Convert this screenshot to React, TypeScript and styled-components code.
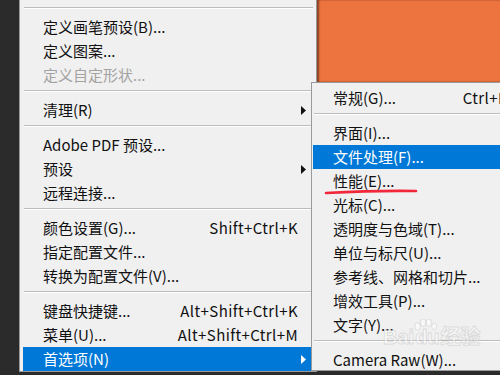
import React from 'react'
import styled, { createGlobalStyle } from 'styled-components'

const GlobalStyle = createGlobalStyle`
  html, body {
    margin: 0;
    padding: 0;
    background: #2b2b2b;
  }
  body {
    font-family: "Noto Sans CJK SC", "Noto Sans", sans-serif;
  }
`

const Page = styled.div`
  position: relative;
  display: flex;
  width: 500px;
  height: 375px;
  overflow: hidden;
  background: #2b2b2b;
`

const Gutter = styled.div`
  width: 19px;
  flex: none;
`

const Menu = styled.div`
  flex: none;
  width: 290px;
  height: 367px;
  padding: 4px 3px 0;
  background: #f0f0f0;
  border-left: 1px solid #9a9a9a;
  border-right: 1px solid #9a9a9a;
  border-bottom: 1px solid #9a9a9a;
`

const Canvas = styled.div`
  flex: 1;
  display: flex;
  flex-direction: column;
`

const Orange = styled.div`
  height: 82px;
  background: #ee743f;
  box-shadow: inset 2px 0 2px rgba(0, 0, 0, 0.45);
`

const SubMenu = styled.div`
  position: absolute;
  left: 311px;
  top: 82px;
  width: 210px;
  height: 284px;
  padding: 3px 1px 0;
  background: #f0f0f0;
  border-left: 1px solid #9a9a9a;
  border-top: 1px solid #9a9a9a;
  border-bottom: 1px solid #9a9a9a;
`

const Row = styled.div<{ $active?: boolean; $disabled?: boolean }>`
  display: flex;
  align-items: center;
  height: 24px;
  padding-left: 20px;
  font-size: 15px;
  line-height: 24px;
  white-space: nowrap;
  color: ${({ $active, $disabled }) => ($active ? '#ffffff' : $disabled ? '#a3a3a3' : '#111111')};
  background: ${({ $active }) => ($active ? '#0078d7' : 'transparent')};
`

const Label = styled.span`
  flex: 1;
`

const Shortcut = styled.span`
  letter-spacing: 0.4px;
`

const ArrowSlot = styled.span<{ $light?: boolean }>`
  width: 15px;
  flex: none;
  display: flex;
  align-items: center;
  padding-left: 3px;
  box-sizing: border-box;

  svg {
    fill: ${({ $light }) => ($light ? '#ffffff' : '#111111')};
  }
`

const Separator = styled.div`
  height: 11px;
  padding-top: 3px;
  box-sizing: border-box;

  &::before {
    content: '';
    display: block;
    margin-left: 1px;
    border-top: 1px solid #bcbcbc;
    border-bottom: 1px solid #ffffff;
  }
`

const Mark = styled.svg`
  position: absolute;
  left: 324px;
  top: 186px;
  overflow: visible;
`

const Watermark = styled.div`
  position: absolute;
  left: 383px;
  top: 327px;
  width: max-content;
  white-space: nowrap;
  font-family: "Liberation Sans", "Noto Sans CJK SC", sans-serif;
  font-size: 20px;
  font-weight: bold;
  line-height: 1;
  color: rgba(255, 255, 255, 0.5);
  -webkit-text-stroke: 1px rgba(160, 160, 160, 0.3);
  pointer-events: none;
  display: flex;
  align-items: flex-end;
  gap: 1px;
`

const Paw = styled.svg`
  position: absolute;
  left: 30px;
  top: -8px;
`

const Arrow = () => (
  <svg width="5" height="9" viewBox="0 0 5 9">
    <path d="M0 0 L5 4.5 L0 9 Z" />
  </svg>
)

type Item = {
  label?: string
  shortcut?: string
  sub?: boolean
  disabled?: boolean
  active?: boolean
  sep?: boolean
}

const mainItems: Item[] = [
  { sep: true },
  { label: '定义画笔预设(B)...' },
  { label: '定义图案...' },
  { label: '定义自定形状...', disabled: true },
  { sep: true },
  { label: '清理(R)', sub: true },
  { sep: true },
  { label: 'Adobe PDF 预设...' },
  { label: '预设', sub: true },
  { label: '远程连接...' },
  { sep: true },
  { label: '颜色设置(G)...', shortcut: 'Shift+Ctrl+K' },
  { label: '指定配置文件...' },
  { label: '转换为配置文件(V)...' },
  { sep: true },
  { label: '键盘快捷键...', shortcut: 'Alt+Shift+Ctrl+K' },
  { label: '菜单(U)...', shortcut: 'Alt+Shift+Ctrl+M' },
  { label: '首选项(N)', sub: true, active: true },
]

const prefItems: Item[] = [
  { label: '常规(G)...', shortcut: 'Ctrl+K' },
  { sep: true },
  { label: '界面(I)...' },
  { label: '文件处理(F)...', active: true },
  { label: '性能(E)...' },
  { label: '光标(C)...' },
  { label: '透明度与色域(T)...' },
  { label: '单位与标尺(U)...' },
  { label: '参考线、网格和切片...' },
  { label: '增效工具(P)...' },
  { label: '文字(Y)...' },
  { sep: true },
  { label: 'Camera Raw(W)...' },
]

const MenuRows = ({ items }: { items: Item[] }) => (
  <>
    {items.map((it, i) =>
      it.sep ? (
        <Separator key={i} />
      ) : (
        <Row key={i} $active={it.active} $disabled={it.disabled}>
          <Label>{it.label}</Label>
          {it.shortcut && <Shortcut>{it.shortcut}</Shortcut>}
          <ArrowSlot $light={it.active}>{it.sub && <Arrow />}</ArrowSlot>
        </Row>
      )
    )}
  </>
)

const App: React.FC = () => {
  return (
    <Page>
      <GlobalStyle />
      <Gutter />
      <Menu>
        <MenuRows items={mainItems} />
      </Menu>
      <Canvas>
        <Orange />
      </Canvas>
      <SubMenu>
        <MenuRows items={prefItems} />
      </SubMenu>
      <Mark width="94" height="10">
        <path d="M2 7 C 30 5.5, 60 4.5, 92 5" stroke="#f2273a" strokeWidth="2.6" strokeLinecap="round" fill="none" />
      </Mark>
      <Watermark>
        <span>Bai</span>
        <span>du</span>
        <span>经验</span>
        <Paw width="24" height="13" viewBox="0 0 26 14">
          <g fill="rgba(255,255,255,0.5)" stroke="rgba(160,160,160,0.3)">
            <ellipse cx="5" cy="8" rx="3" ry="4" />
            <ellipse cx="11" cy="4" rx="3" ry="4" />
            <ellipse cx="17" cy="4" rx="3" ry="4" />
            <ellipse cx="23" cy="8" rx="2.6" ry="3.6" />
          </g>
        </Paw>
      </Watermark>
    </Page>
  )
}

export default App
